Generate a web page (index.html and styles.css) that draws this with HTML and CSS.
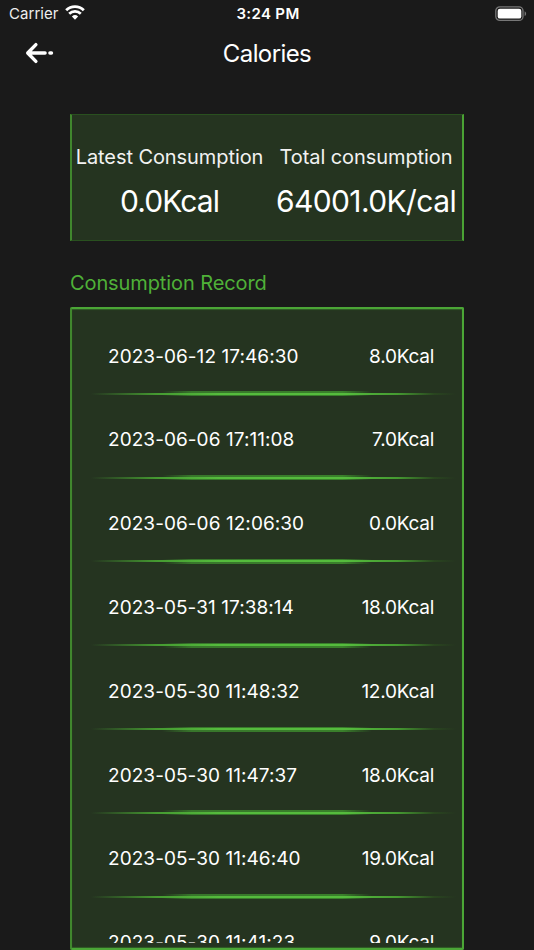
FILE: index.html
```html
<!DOCTYPE html>
<html lang="en">
<head>
  <meta charset="UTF-8">
  <meta name="viewport" content="width=device-width, initial-scale=1.0">
  <title>Calories</title>
  <link rel="stylesheet" href="styles.css">
</head>
<body>
  <div class="status-bar">
    <div class="carrier">
      <span>Carrier</span>
      <svg class="wifi" width="20" height="15" viewBox="0 0 20 15">
        <path d="M1.2 5.2a12.7 12.7 0 0 1 17.6 0" fill="none" stroke="#fff" stroke-width="2.9"/>
        <path d="M4.2 8.7a8.2 8.2 0 0 1 11.6 0" fill="none" stroke="#fff" stroke-width="2.7"/>
        <path d="M6.9 11.5a4.5 4.5 0 0 1 6.2 0L10 14.7z" fill="#fff"/>
      </svg>
    </div>
    <div class="time">3:24 PM</div>
    <svg class="battery" width="32" height="16" viewBox="0 0 32 16">
      <rect x=".8" y=".8" width="27.2" height="13.6" rx="4" fill="none" stroke="#777" stroke-width="1.3"/>
      <rect x="2.7" y="2.7" width="23.6" height="9.9" rx="2.2" fill="#fff"/>
      <path d="M29.6 5.2c2 .7 2 4.1 0 4.8z" fill="#777"/>
    </svg>
  </div>

  <header class="nav">
    <svg class="back" width="30" height="22" viewBox="0 0 30 22" fill="none" stroke="#fff" stroke-width="3.4" stroke-linecap="round" stroke-linejoin="round">
      <path d="M10.9 2.6 2.7 11l8.2 8.4M3 11h17.1M24.9 11h1.6"/>
    </svg>
    <h1>Calories</h1>
  </header>

  <main>
    <section class="summary">
      <div class="latest">
        <div class="label">Latest Consumption</div>
        <div class="value">0.0Kcal</div>
      </div>
      <div class="total">
        <div class="label">Total consumption</div>
        <div class="value">64001.0K/cal</div>
      </div>
    </section>

    <h2>Consumption Record</h2>

    <section class="record">
      <ul>
        <li><span>2023-06-12 17:46:30</span><span class="kcal">8.0Kcal</span></li>
        <li><span>2023-06-06 17:11:08</span><span class="kcal">7.0Kcal</span></li>
        <li><span>2023-06-06 12:06:30</span><span class="kcal">0.0Kcal</span></li>
        <li><span>2023-05-31 17:38:14</span><span class="kcal">18.0Kcal</span></li>
        <li><span>2023-05-30 11:48:32</span><span class="kcal">12.0Kcal</span></li>
        <li><span>2023-05-30 11:47:37</span><span class="kcal">18.0Kcal</span></li>
        <li><span>2023-05-30 11:46:40</span><span class="kcal">19.0Kcal</span></li>
        <li><span>2023-05-30 11:41:23</span><span class="kcal">9.0Kcal</span></li>
      </ul>
    </section>
  </main>
</body>
</html>
```
FILE: styles.css
```css
* {
  box-sizing: border-box;
}
body {
  margin: 0;
  height: 950px;
  overflow: hidden;
  background-color: #1a1a1a;
  color: #fff;
  font-family: Inter, "Liberation Sans", sans-serif;
}
h1, h2, ul {
  margin: 0;
  padding: 0;
  font-weight: 400;
}

.status-bar {
  display: grid;
  grid-template-columns: 1fr auto 1fr;
  height: 27px;
  padding: 5px 7px 0 9px;
  line-height: 18px;
}
.carrier {
  display: flex;
  font-size: 15px;
  letter-spacing: 0.05px;
  color: #eee;
}
.wifi {
  margin-left: 6px;
}
.time {
  font-size: 15px;
  font-weight: 600;
  letter-spacing: 0.35px;
}
.battery {
  justify-self: end;
  margin-top: 1px;
}

.nav {
  display: grid;
  grid-template-columns: 1fr auto 1fr;
  align-items: center;
  height: 52px;
}
.back {
  margin-left: 25px;
}
h1 {
  padding-top: 1px;
  font-size: 24px;
  line-height: 30px;
  letter-spacing: -0.6px;
}

main {
  width: 394px;
  margin: 35px auto 0;
}

.summary {
  display: flex;
  height: 127px;
  padding-top: 29px;
  border: 1px solid #29501f;
  border-left: 2px solid #40872d;
  border-right: 2px solid #4aa234;
  background-color: #253420;
  text-align: center;
  white-space: nowrap;
}
.latest {
  width: 195px;
}
.total {
  flex: 1;
  padding-left: 3px;
}
.label {
  font-size: 20px;
  line-height: 26px;
  letter-spacing: -0.08px;
  color: #f2f2f2;
}
.value {
  margin-top: 12px;
  font-size: 30px;
  line-height: 38px;
  letter-spacing: -0.6px;
}
.latest .value {
  letter-spacing: -0.9px;
}

h2 {
  margin: 29px 0 10px;
  font-size: 20px;
  line-height: 27px;
  letter-spacing: -0.1px;
  color: #4fb138;
}

.record {
  height: 643px;
  padding-bottom: 5px;
  border: 2px solid #4ba636;
  border-left-color: #40872d;
  border-radius: 2px;
  background-color: #253420;
  box-shadow: inset 0 1px 1px #315f27, inset 0 -1px 1px #315f27;
}
.record ul {
  height: 100%;
  padding-top: 0.5px;
  overflow: hidden;
  list-style: none;
}
.record li {
  display: flex;
  position: relative;
  justify-content: space-between;
  height: 83.83px;
  padding: 33px 28px 0 36px;
  font-size: 19px;
  line-height: 28px;
  letter-spacing: 0.06px;
}
.record .kcal {
  letter-spacing: -0.25px;
}

/* glowing divider under each row */
.record li::before,
.record li::after {
  content: "";
  position: absolute;
}
.record li::before {
  left: 90px;
  right: 90px;
  bottom: -3px;
  height: 5px;
  background: linear-gradient(90deg, transparent, #38762b 14%, #3a802b 86%, transparent);
  filter: blur(0.6px);
}
.record li::after {
  left: 19px;
  right: 6px;
  bottom: -1.5px;
  height: 2px;
  background: linear-gradient(90deg, transparent, #459a31 18%, #55bb3d 35%, #55bb3d 70%, #459a31 84%, #29451f 94%, transparent);
}
```
